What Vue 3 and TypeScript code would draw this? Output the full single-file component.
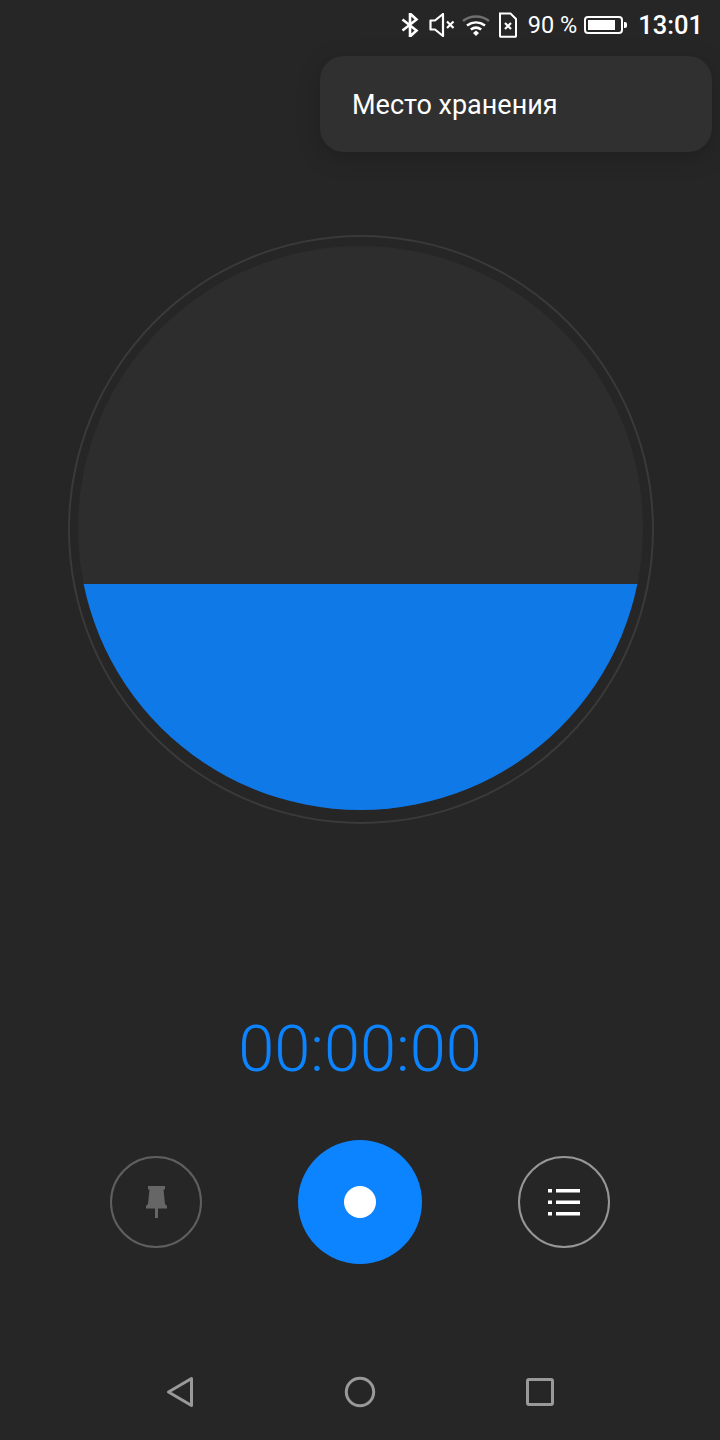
<script setup lang="ts">
const time = '00:00:00'
</script>

<template>
  <div class="screen">
    <header class="status">
      <svg class="ic bt" width="18" height="24" viewBox="0 0 18 24"><path d="M1.500 6.500 15.500 17.500 9 23.500V.5l6.500 6L1.500 17.500" fill="none" stroke="#fff" stroke-width="2.600"/></svg>
      <svg class="ic sp" width="26" height="24" viewBox="0 0 26 24"><path d="M1.500 7.500v9h4.500l8 6.500V1L6 7.500z" fill="none" stroke="#fff" stroke-width="2.200" stroke-linejoin="round"/><path d="M18 8.500l6.500 6.500M24.500 8.500 18 15" stroke="#fff" stroke-width="2.200"/></svg>
      <svg class="ic wf" width="28" height="24" viewBox="0 0 28 24"><path d="M1 8c7.500-6 18.500-6 26 0" fill="none" stroke="#6f6f6f" stroke-width="2.600"/><path d="M5 12.500c5.500-4 12.500-4 18 0" fill="none" stroke="#fff" stroke-width="2.600"/><path d="M8.800 16.500c3.200-2.300 7.200-2.300 10.400 0" fill="none" stroke="#fff" stroke-width="2.600"/><path d="M11 20l3-2.500 3 2.500-3 3z" fill="#fff"/></svg>
      <svg class="ic sd" width="20" height="26" viewBox="0 0 20 26"><path d="M2 1.500h10.500L18 7v17a.8.8 0 0 1-.8.800H2.800A.8.8 0 0 1 2 24z" fill="none" stroke="#fff" stroke-width="2"/><path d="M7 11l6 6M13 11l-6 6" stroke="#fff" stroke-width="2.200"/></svg>
      <span class="pct">90 %</span>
      <div class="battery"><div class="level"></div></div>
      <span class="clock">13:01</span>
    </header>

    <div class="menu">Место хранения</div>

    <main class="dial-wrap">
      <div class="ring">
        <div class="disc"><div class="fill"></div></div>
      </div>
    </main>

    <div class="timer">{{ time }}</div>

    <section class="controls">
      <button class="round pin">
        <svg width="21" height="32" viewBox="0 0 21 32"><path d="M2 0h17v3.500h-1.500L19 18l2 2v2.500H12V32H9V22.500H0V20l2-2L3.500 3.500H2z" fill="#666"/></svg>
      </button>
      <button class="rec"><span class="dot"></span></button>
      <button class="round list">
        <svg width="32" height="27" viewBox="0 0 32 27"><g fill="#fff"><rect x="0" y="0" width="4" height="3.500"/><rect x="8" y="0" width="24" height="3.500"/><rect x="0" y="11.500" width="4" height="3.500"/><rect x="8" y="11.500" width="24" height="3.500"/><rect x="0" y="23" width="4" height="3.500"/><rect x="8" y="23" width="24" height="3.500"/></g></svg>
      </button>
    </section>

    <nav class="navbar">
      <svg width="30" height="34" viewBox="0 0 30 34"><path d="M3.500 17 26.500 3.500v27z" fill="none" stroke="#999" stroke-width="3" stroke-linejoin="round"/></svg>
      <svg width="32" height="32" viewBox="0 0 32 32"><circle cx="16" cy="16" r="13.700" fill="none" stroke="#999" stroke-width="3"/></svg>
      <svg width="28" height="28" viewBox="0 0 28 28"><rect x="1.500" y="1.500" width="25" height="25" rx="1.500" fill="none" stroke="#999" stroke-width="3"/></svg>
    </nav>
  </div>
</template>

<style>
body { margin: 0; background: #262626; }
</style>

<style scoped>
.screen {
  position: relative;
  width: 720px;
  height: 1440px;
  overflow: hidden;
  background: #262626;
  font-family: Roboto, "Noto Sans", sans-serif;
  display: flex;
  flex-direction: column;
}
.status {
  height: 48px;
  box-sizing: border-box;
  padding: 1px 17px 0 0;
  display: flex;
  align-items: center;
  justify-content: flex-end;
  color: #fff;
}
.ic { flex: none; }
.bt { margin-right: 10px; }
.sp { margin-right: 7px; }
.wf { margin-right: 8px; }
.sd { margin-right: 10px; }
.pct { font-size: 23.5px; margin-right: 7px; }
.battery {
  width: 39px;
  height: 18px;
  border: 2px solid #fff;
  border-radius: 4px;
  padding: 2px;
  box-sizing: border-box;
  position: relative;
  margin-right: 15px;
}
.battery::after {
  content: "";
  position: absolute;
  right: -6px;
  top: 4px;
  width: 3px;
  height: 6px;
  border-radius: 0 2px 2px 0;
  background: #fff;
}
.level { width: 86%; height: 100%; background: #fff; }
.clock { font-size: 25.5px; font-weight: 500; }
.menu {
  position: absolute;
  left: 320px;
  top: 56px;
  width: 392px;
  height: 96px;
  box-sizing: border-box;
  padding: 2px 0 0 32px;
  display: flex;
  align-items: center;
  border-radius: 24px;
  background: #303030;
  box-shadow: 0 6px 24px rgba(0,0,0,.18);
  color: #fff;
  font-size: 27px;
}
.dial-wrap {
  height: 590px;
  margin-top: 187px;
  display: flex;
  justify-content: center;
  padding-left: 2px;
}
.ring {
  width: 586px;
  height: 589px;
  box-sizing: border-box;
  border: 2px solid #3a3a3a;
  border-radius: 50%;
  padding: 9px 9px 0 8px;
}
.disc {
  height: 564px;
  border-radius: 50%;
  overflow: hidden;
  background: #2d2d2d;
  display: flex;
  flex-direction: column;
  justify-content: flex-end;
}
.fill { height: 226px; background: #0f79e8; }
.timer {
  margin-top: 186px;
  text-align: center;
  color: #0d84ff;
  font-size: 65px;
  font-weight: 300;
  line-height: 76px;
}
.controls {
  margin-top: 53px;
  display: flex;
  justify-content: center;
  align-items: center;
  gap: 96px;
}
button {
  padding: 0;
  background: none;
  border: 0;
  display: flex;
  align-items: center;
  justify-content: center;
  border-radius: 50%;
  flex: none;
}
.round { width: 92px; height: 92px; box-sizing: border-box; border: 2px solid; }
.pin { border-color: #5f5f5f; }
.list { border-color: #969696; }
.rec { width: 124px; height: 124px; background: #0d84ff; }
.dot { width: 32px; height: 32px; border-radius: 50%; background: #fff; }
.navbar {
  margin-top: 111px;
  display: grid;
  grid-template-columns: repeat(3, 180px);
  justify-content: center;
  justify-items: center;
  align-items: center;
}
</style>
